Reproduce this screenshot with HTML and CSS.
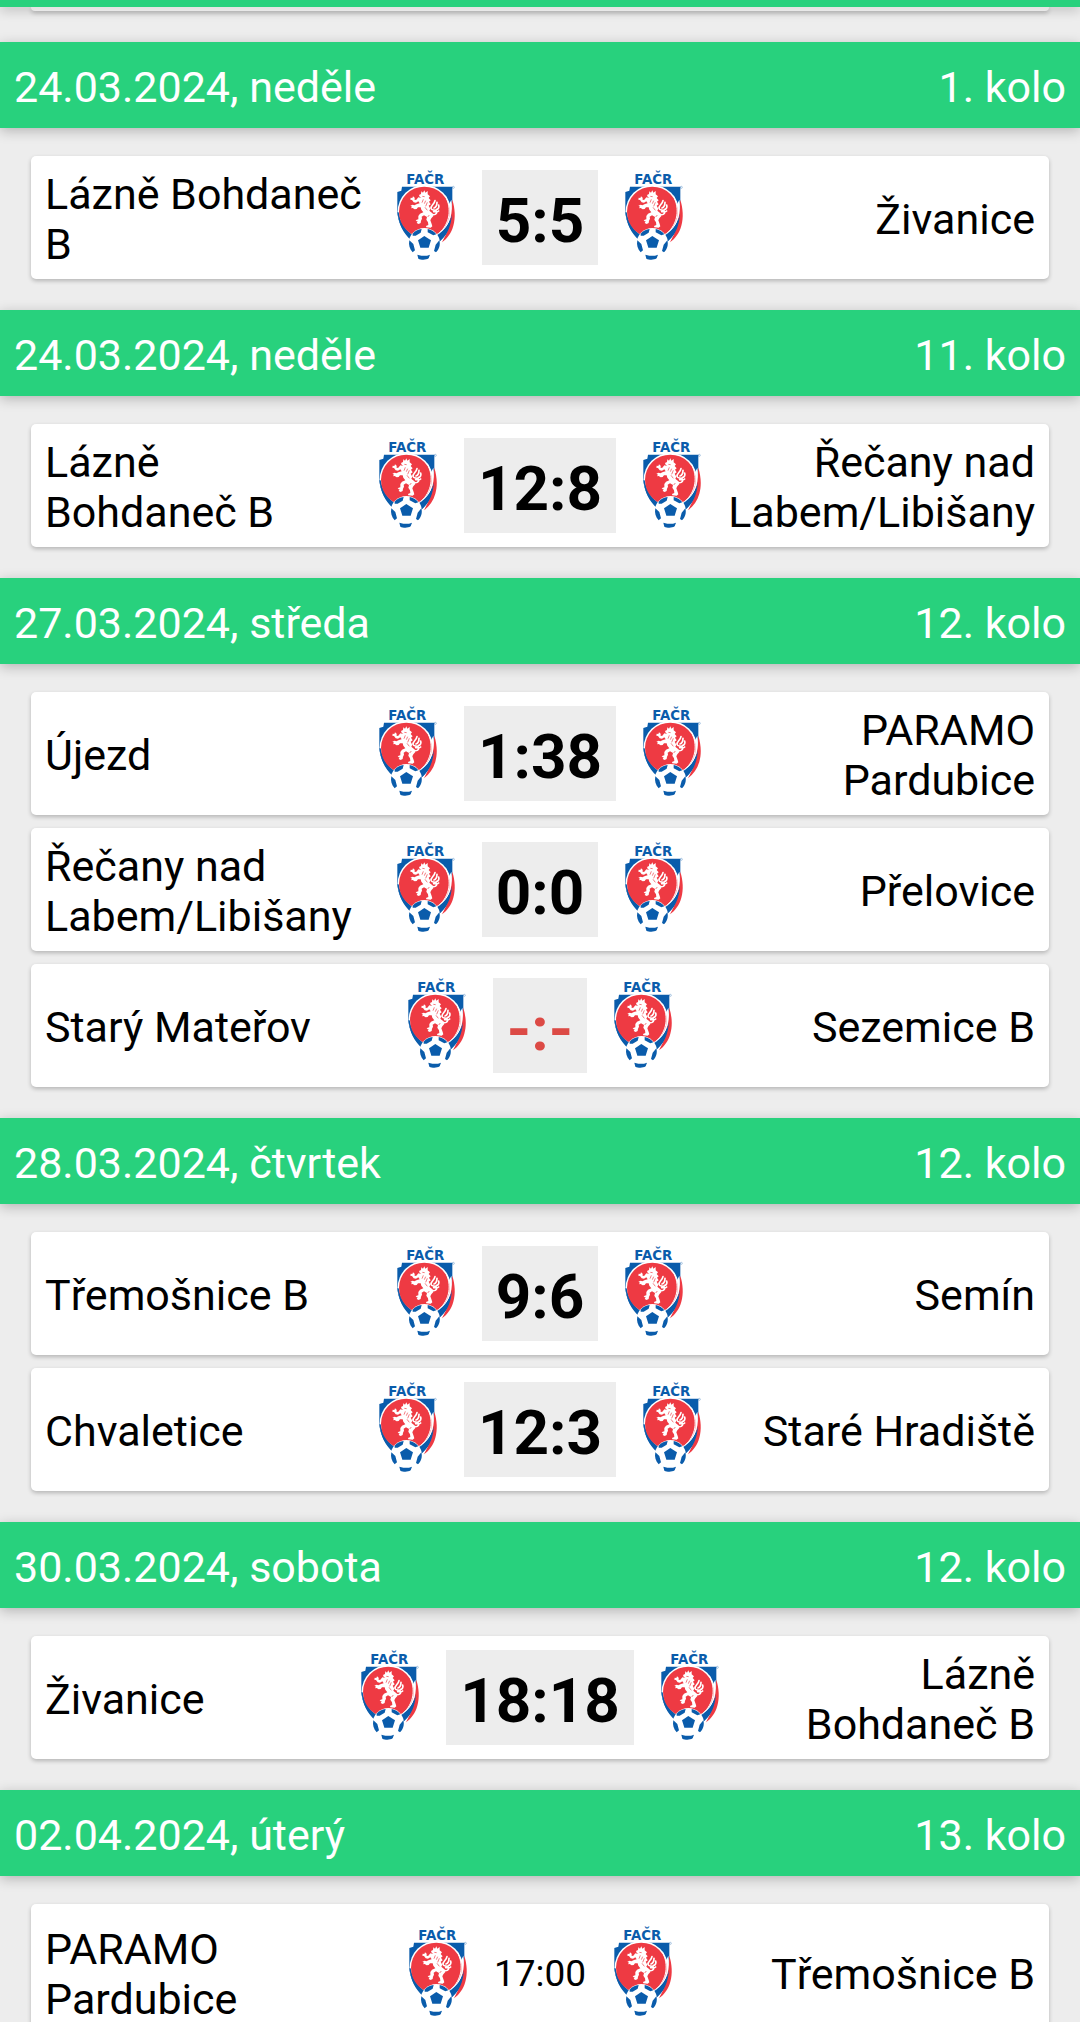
FILE: index.html
```
<!DOCTYPE html>
<html lang="cs">
<head>
    <meta charset="UTF-8">
    <meta name="viewport" content="width=device-width, initial-scale=1">
    <title>Zápasy</title>
    <link rel="stylesheet" href="styles.css">
</head>
<body>
    <!-- Club badge, shared by all matches -->
    <svg class="sprite" aria-hidden="true">
        <symbol id="badge" viewBox="0 0 240 315">
            <text class="badge-text" x="118" y="57" text-anchor="middle">FAČR</text>
            <circle cx="202" cy="67" r="3" fill="none" stroke="#7fa9d3" stroke-width="2"/>
            <!-- Shield -->
            <path fill="#0a5cab" d="M48 65H199V150C199 180 185 212 152 236L80 226C52 204 34 172 34 136V81L46 77Z"/>
            <path fill="#ee3a43" d="M199 104C207 130 209 158 202 182C196 204 184 220 168 232C178 212 187 196 190 180Z"/>
            <path fill="#fff" d="M196 104C202 140 194 178 160 210L150 205C178 186 190 158 188 120Z"/>
            <circle cx="115" cy="140" r="80" fill="#fff"/>
            <path fill="#fff" d="M36 142C40 174 56 198 82 218L92 208L52 164Z"/>
            <path fill="#0a5cab" d="M34 142C39 180 52 206 76 226L84 213C60 196 44 176 38 142Z"/>
            <path fill="#0a5cab" d="M198 148C192 176 178 194 156 208L160 230C182 212 195 186 198 148Z"/>
            <circle cx="115" cy="141" r="76" fill="#ee3a43"/>
            <path d="M178 92C198 132 192 176 158 206" fill="none" stroke="#fff" stroke-width="3"/>
            <!-- Lion -->
            <path fill="#fff" d="M106 79L111 83L115 76L118 83L125 78L125 88L132 94L128 99L134 106L129 110L134 118L128 122L133 131L130 137L139 145L142 153L136 160L133 166L137 177L139 184L134 188L121 187L120 183L127 180L126 172L121 164L123 156L114 151L107 155L108 161L105 167L104 174L98 177L92 174L95 169L89 168L92 164L97 163L97 153L102 146L112 142L106 134L104 127L96 127L92 132L86 133L80 129L76 130L77 124L73 122L80 119L85 121L93 117L101 115L97 109L90 113L83 112L78 105L73 104L74 98L79 99L81 94L86 98L86 105L91 104L97 97L106 99L101 95L99 90L105 87Z"/>
            <path fill="none" stroke="#fff" stroke-width="5" stroke-linecap="round" d="M135 146C144 153 154 147 151 139C148 133 137 138 135 130C134 122 145 118 147 107M144 129C151 127 153 119 153 112M151 134C158 132 160 126 158 120M143 140C150 139 153 143 158 138"/>
            <path fill="none" stroke="#ee3a43" stroke-width="2" d="M109 94L116 95M112 103L108 113M119 107L115 116M124 112L119 124M117 127L124 136M125 156L130 150"/>
            <!-- Ball -->
            <circle cx="115" cy="236" r="47" fill="#fff"/>
            <path fill="#0a5cab" d="M115 213L135 226L128 248H103L96 226Z"/>
            <path fill="#0a5cab" d="M80 206C87 198 96 193 107 192L104 203L89 212L80 212ZM125 192C136 194 146 200 151 208L142 211L125 202Z"/>
            <path fill="#0a5cab" d="M70 226L82 237L87 256L80 262C71 252 67 240 70 226ZM160 226C164 241 159 254 150 262L144 258L149 239Z"/>
            <path fill="#0a5cab" d="M94 269L106 272H123L132 269L128 280C119 286 105 285 97 281Z"/>
        </symbol>
    </svg>

    <main class="schedule">
        <!-- End of the previous round -->
        <div class="round-bar round-bar-end"></div>
        <div class="match match-end"></div>

        <section class="round">
            <h2 class="round-bar"><span>24.03.2024, neděle</span><span>1. kolo</span></h2>
            <div class="match">
                <span class="team">Lázně Bohdaneč B</span>
                <svg class="badge"><use href="#badge"/></svg>
                <strong class="score">5:5</strong>
                <svg class="badge"><use href="#badge"/></svg>
                <span class="team away">Živanice</span>
            </div>
        </section>

        <section class="round">
            <h2 class="round-bar"><span>24.03.2024, neděle</span><span>11. kolo</span></h2>
            <div class="match">
                <span class="team">Lázně Bohdaneč B</span>
                <svg class="badge"><use href="#badge"/></svg>
                <strong class="score">12:8</strong>
                <svg class="badge"><use href="#badge"/></svg>
                <span class="team away">Řečany nad Labem/Libišany</span>
            </div>
        </section>

        <section class="round">
            <h2 class="round-bar"><span>27.03.2024, středa</span><span>12. kolo</span></h2>
            <div class="match">
                <span class="team">Újezd</span>
                <svg class="badge"><use href="#badge"/></svg>
                <strong class="score">1:38</strong>
                <svg class="badge"><use href="#badge"/></svg>
                <span class="team away">PARAMO Pardubice</span>
            </div>
            <div class="match">
                <span class="team">Řečany nad Labem/Libišany</span>
                <svg class="badge"><use href="#badge"/></svg>
                <strong class="score">0:0</strong>
                <svg class="badge"><use href="#badge"/></svg>
                <span class="team away">Přelovice</span>
            </div>
            <div class="match">
                <span class="team">Starý Mateřov</span>
                <svg class="badge"><use href="#badge"/></svg>
                <strong class="score missing">-:-</strong>
                <svg class="badge"><use href="#badge"/></svg>
                <span class="team away">Sezemice B</span>
            </div>
        </section>

        <section class="round">
            <h2 class="round-bar"><span>28.03.2024, čtvrtek</span><span>12. kolo</span></h2>
            <div class="match">
                <span class="team">Třemošnice B</span>
                <svg class="badge"><use href="#badge"/></svg>
                <strong class="score">9:6</strong>
                <svg class="badge"><use href="#badge"/></svg>
                <span class="team away">Semín</span>
            </div>
            <div class="match">
                <span class="team">Chvaletice</span>
                <svg class="badge"><use href="#badge"/></svg>
                <strong class="score">12:3</strong>
                <svg class="badge"><use href="#badge"/></svg>
                <span class="team away">Staré Hradiště</span>
            </div>
        </section>

        <section class="round">
            <h2 class="round-bar"><span>30.03.2024, sobota</span><span>12. kolo</span></h2>
            <div class="match">
                <span class="team">Živanice</span>
                <svg class="badge"><use href="#badge"/></svg>
                <strong class="score">18:18</strong>
                <svg class="badge"><use href="#badge"/></svg>
                <span class="team away">Lázně Bohdaneč B</span>
            </div>
        </section>

        <section class="round">
            <h2 class="round-bar"><span>02.04.2024, úterý</span><span>13. kolo</span></h2>
            <div class="match upcoming">
                <span class="team">PARAMO Pardubice</span>
                <svg class="badge"><use href="#badge"/></svg>
                <time class="kickoff" datetime="2024-04-02T17:00">17:00</time>
                <svg class="badge"><use href="#badge"/></svg>
                <span class="team away">Třemošnice B</span>
            </div>
        </section>
    </main>
</body>
</html>
```

FILE: styles.css
```
* {
    margin: 0;
    padding: 0;
    box-sizing: border-box;
}

body {
    background: #ededed;
    color: #000;
    font-family: Roboto, "Noto Sans", sans-serif;
    font-size: 43px;
    line-height: 50px;
}

.sprite {
    display: none;
}

.schedule {
    height: 100vh;
    overflow: hidden;
}

/* Round header */
.round-bar {
    display: flex;
    justify-content: space-between;
    align-items: center;
    min-height: 86px;
    margin-bottom: 28px;
    padding: 4px 14px 0;
    background: #28d17d;
    color: #fff;
    font-size: 43px;
    font-weight: 400;
    box-shadow: 0 3px 12px rgba(0, 0, 0, 0.24);
}

.round-bar-end {
    position: relative;
    z-index: 1;
    min-height: 7px;
    margin-bottom: 0;
    padding: 0;
}

.round {
    padding-bottom: 31px;
}

/* Match card */
.match {
    display: flex;
    align-items: center;
    min-height: 123px;
    margin: 0 31px;
    padding: 0 14px;
    background: #fff;
    border-radius: 5px;
    box-shadow: 0 2px 4px rgba(0, 0, 0, 0.24);
}

.match + .match {
    margin-top: 13px;
}

.match-end {
    min-height: 4px;
    margin-bottom: 31px;
    border-radius: 0 0 5px 5px;
}

.upcoming {
    min-height: 138px;
}

.team {
    flex: 1;
    min-width: 0;
    margin-right: 8px;
    padding-top: 2px;
}

.away {
    margin-right: 0;
    margin-left: 8px;
    text-align: right;
}

.badge {
    flex: none;
    width: 80px;
    height: 105px;
}

.badge-text {
    fill: #0a5cab;
    font-family: "DejaVu Sans", sans-serif;
    font-size: 40px;
    font-weight: 700;
}

.score {
    margin: 0 16px;
    padding: 14px 14px 7px;
    background: #ededed;
    font-size: 62px;
    font-weight: 700;
    line-height: 74px;
}

.missing {
    color: #dc4a45;
}

.kickoff {
    min-width: 93px;
    margin: 0 16px;
    padding-top: 2px;
    font-size: 37px;
    text-align: center;
}
```
